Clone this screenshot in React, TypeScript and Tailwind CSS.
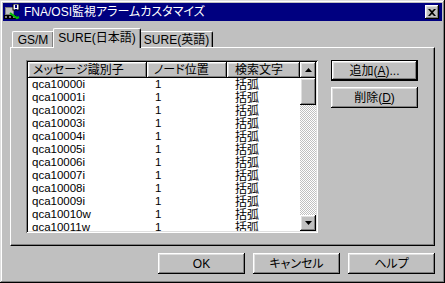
import React from 'react';

const raised =
  'shadow-[inset_-1px_-1px_#000,inset_1px_1px_#fff,inset_-2px_-2px_#808080,inset_2px_2px_#dfdfdf]';
const sunken =
  'shadow-[inset_1px_1px_#808080,inset_-1px_-1px_#fff,inset_2px_2px_#000,inset_-2px_-2px_#dfdfdf]';
const font = "font-['Liberation_Sans','Noto_Sans_CJK_JP',sans-serif] [font-feature-settings:'palt']";

const rows = [
  'qca10000i',
  'qca10001i',
  'qca10002i',
  'qca10003i',
  'qca10004i',
  'qca10005i',
  'qca10006i',
  'qca10007i',
  'qca10008i',
  'qca10009i',
  'qca10010w',
  'qca10011w',
];

const TitleIcon = () => (
  <svg width="16" height="16" viewBox="0 0 16 16" className="shrink-0">
    <rect x="1" y="3" width="9" height="8" fill="#808080" />
    <rect x="2" y="4" width="7" height="6" fill="#c0c0c0" />
    <rect x="0" y="11" width="12" height="4" fill="#000" />
    <rect x="1" y="12" width="2" height="2" fill="#808080" />
    <rect x="5" y="12" width="2" height="2" fill="#808080" />
    <rect x="9" y="12" width="2" height="2" fill="#808080" />
    <path d="M6 9 L13 14 L15 13" stroke="#00c000" strokeWidth="2" fill="none" />
    <rect x="9" y="0" width="6" height="6" fill="#fff" stroke="#000" strokeWidth="1" />
    <rect x="11" y="1" width="2" height="3" fill="#000080" />
    <rect x="11" y="5" width="2" height="1" fill="#000080" />
  </svg>
);

const Arrow = ({ up }: { up?: boolean }) => (
  <svg width="7" height="4" viewBox="0 0 7 4">
    <path d={up ? 'M3.5 0 L7 4 L0 4 Z' : 'M0 0 L7 0 L3.5 4 Z'} fill="#000" />
  </svg>
);

const Button = ({
  children,
  isDefault,
  className = '',
}: {
  children: React.ReactNode;
  isDefault?: boolean;
  className?: string;
}) => (
  <div
    className={`w-[87px] h-[21px] bg-[#c0c0c0] ${isDefault ? 'border border-black' : ''} ${className}`}
  >
    <div className={`w-full h-full flex items-center justify-center text-[12px] text-black ${raised}`}>
      {children}
    </div>
  </div>
);

export default function App() {
  return (
    <div
      className={`w-[445px] h-[283px] bg-[#c0c0c0] p-[3px] flex flex-col ${font} shadow-[inset_-1px_-1px_#000,inset_1px_1px_#dfdfdf,inset_-2px_-2px_#808080,inset_2px_2px_#fff]`}
    >
      {/* title bar */}
      <div className="h-[18px] bg-[#000080] flex items-center pl-[1px] pr-[3px] shrink-0">
        <TitleIcon />
        <span className="ml-[4px] text-white text-[12px] leading-none">FNA/OSI監視アラームカスタマイズ</span>
        <div className={`ml-auto w-[14px] h-[14px] bg-[#c0c0c0] flex items-center justify-center ${raised}`}>
          <svg width="8" height="7" viewBox="0 0 8 7">
            <path d="M0 0 L2 0 L4 2 L6 0 L8 0 L5 3.5 L8 7 L6 7 L4 5 L2 7 L0 7 L3 3.5 Z" fill="#000" />
          </svg>
        </div>
      </div>

      <div className="flex flex-col px-[7px]">
        {/* tabs */}
        <div className="mt-[7px] h-[19px] flex items-end pl-[2px]">
          <div className="h-[16px] w-[41px] border-t border-l border-white rounded-tl-[2px] flex items-center justify-center text-[12px] shadow-[inset_-1px_0_#808080]">
            GS/M
          </div>
          <div className="relative z-10 -mb-[1px] h-[20px] w-[88px] bg-[#c0c0c0] border-t border-l border-white border-r border-r-black rounded-t-[2px] flex items-center justify-center text-[12px] shadow-[inset_-1px_0_#808080] pb-[2px]">
            SURE(日本語)
          </div>
          <div className="h-[16px] w-[72px] border-t border-white border-r border-r-black rounded-tr-[2px] flex items-center justify-center text-[12px] shadow-[inset_-1px_0_#808080]">
            SURE(英語)
          </div>
        </div>

        {/* tab panel */}
        <div className="h-[199px] border-t border-l border-white border-r border-b border-r-black border-b-black shadow-[inset_-1px_-1px_#808080] flex items-start pt-[12px] pl-[15px]">
          {/* list view */}
          <div className={`w-[292px] h-[173px] p-[2px] bg-white flex ${sunken}`}>
            <div className="flex-1 flex flex-col overflow-hidden">
              <div className="h-[16px] flex shrink-0 bg-[#c0c0c0] text-[12px]">
                <div className={`w-[119px] pl-[5px] flex items-center ${raised}`}>メッセージ識別子</div>
                <div className={`w-[80px] pl-[7px] flex items-center ${raised}`}>ノード位置</div>
                <div className={`flex-1 pl-[8px] flex items-center ${raised}`}>検索文字</div>
              </div>
              {rows.map((r) => (
                <div key={r} className="h-[13px] flex items-center shrink-0 text-black">
                  <div className="w-[119px] pl-[4px] text-[11.5px]">{r}</div>
                  <div className="w-[80px] pl-[8px] text-[11.5px]">1</div>
                  <div className="flex-1 pl-[8px] text-[12px] leading-none">括弧</div>
                </div>
              ))}
            </div>
            {/* scrollbar */}
            <div className="w-[16px] flex flex-col">
              <div className={`h-[16px] bg-[#c0c0c0] flex items-center justify-center ${raised}`}>
                <Arrow up />
              </div>
              <div className={`h-[27px] bg-[#c0c0c0] ${raised}`} />
              <div className="flex-1 bg-[repeating-conic-gradient(#c0c0c0_0%_25%,#ffffff_0%_50%)] bg-[length:2px_2px]" />
              <div className={`h-[16px] bg-[#c0c0c0] flex items-center justify-center ${raised}`}>
                <Arrow />
              </div>
            </div>
          </div>

          {/* side buttons */}
          <div className="ml-[13px] flex flex-col gap-[6px]">
            <Button isDefault>
              追加(<span className="underline">A</span>)...
            </Button>
            <Button>
              削除(<span className="underline">D</span>)
            </Button>
          </div>
        </div>

        {/* bottom buttons */}
        <div className="mt-[7px] flex justify-end gap-[8px]">
          <Button>OK</Button>
          <Button>キャンセル</Button>
          <Button>ヘルプ</Button>
        </div>
      </div>
    </div>
  );
}
